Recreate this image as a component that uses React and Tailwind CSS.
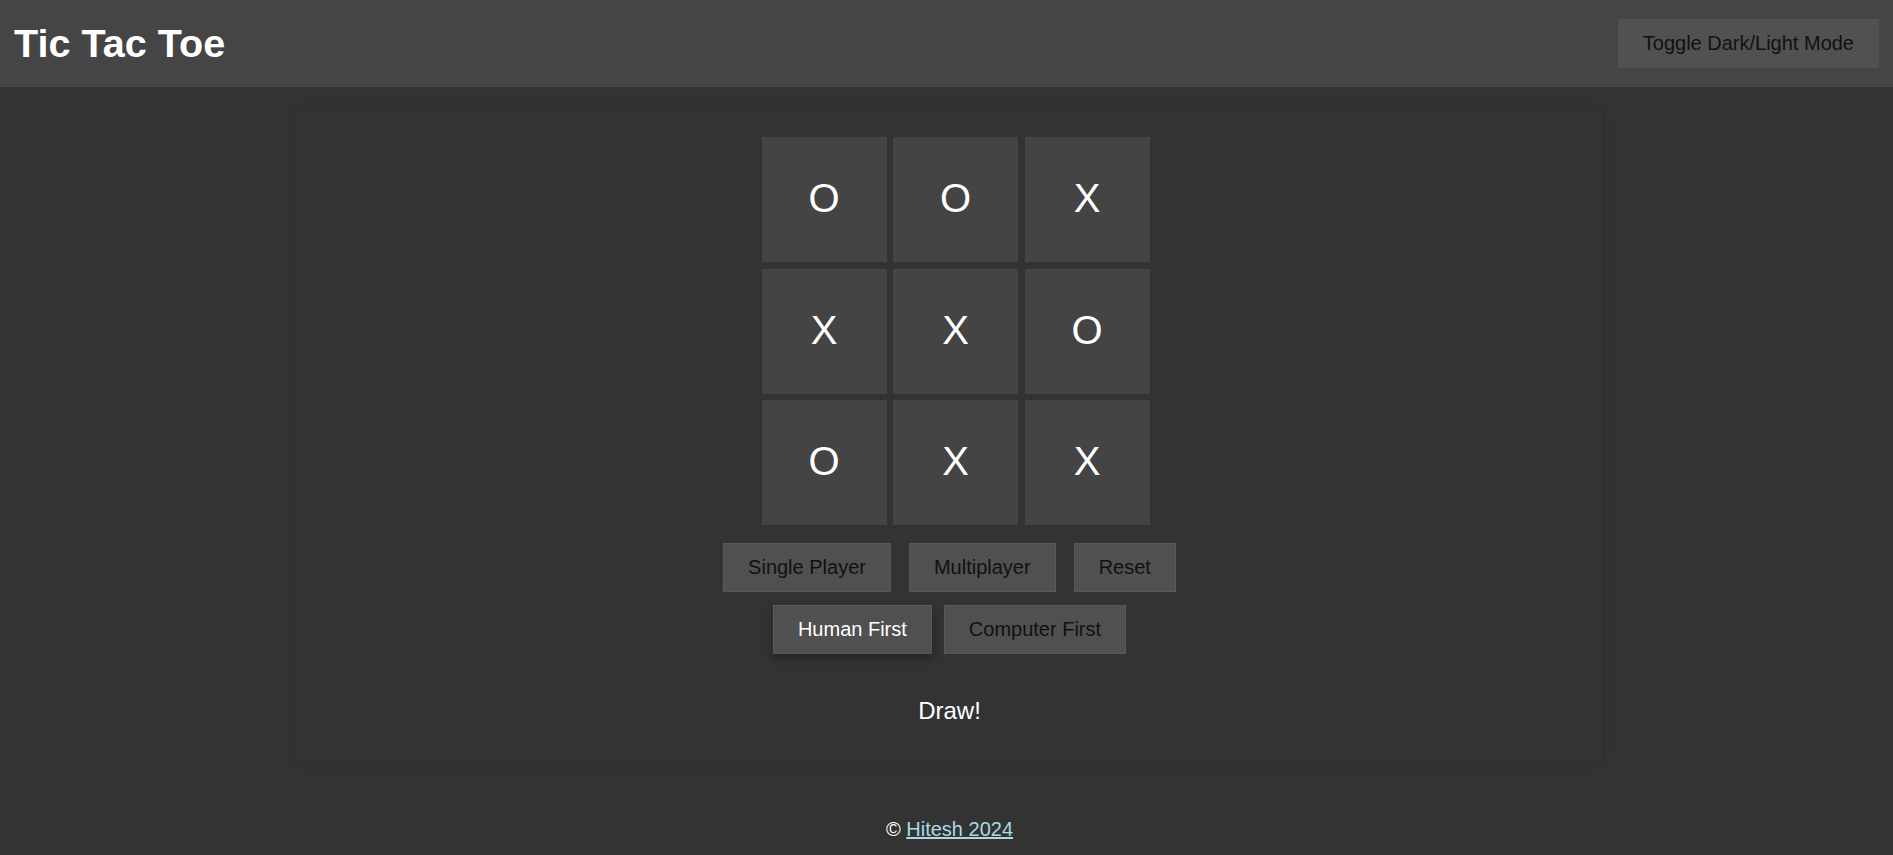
import React from "react";

const board = ["O", "O", "X", "X", "X", "O", "O", "X", "X"];

function Btn({ children, active }) {
  return (
    <button
      className={
        active
          ? "bg-[#505050] border border-[#595959] px-[24px] py-[12px] text-[20px] leading-[23px] text-white shadow-[0_4px_8px_rgba(0,0,0,0.35)]"
          : "bg-[#505050] border border-[#595959] px-[24px] py-[12px] text-[20px] leading-[23px] text-[#111]"
      }
    >
      {children}
    </button>
  );
}

export default function App() {
  return (
    <div
      className="min-h-[855px] bg-[#333333] text-white"
      style={{ fontFamily: '"Liberation Sans", Arial, sans-serif' }}
    >
      <header className="h-[87px] bg-[#454545] flex items-center justify-between px-[14px]">
        <h1 className="text-[39.6px] font-bold leading-none text-white">Tic Tac Toe</h1>
        <button className="bg-[#515151] border border-[#515151] px-[24px] py-[12px] text-[20px] leading-[23px] text-[#111]">
          Toggle Dark/Light Mode
        </button>
      </header>

      <div className="pt-[23px] pl-[6px] flex justify-center">
        <div className="w-[1305px] shadow-[0_0_10px_rgba(0,0,0,0.12)] pt-[27px] pb-[37px] flex flex-col items-center">
          <div className="w-[400px] flex justify-end">
            <div className="grid grid-cols-[125px_125px_125px] gap-[6.5px]">
              {board.map((v, i) => (
                <div
                  key={i}
                  className="w-[125px] h-[125px] bg-[#444444] flex items-center justify-center pb-[3px] text-[40px] text-white"
                >
                  {v}
                </div>
              ))}
            </div>
          </div>
          <div className="mt-[18px] flex gap-[18px]">
            <Btn>Single Player</Btn>
            <Btn>Multiplayer</Btn>
            <Btn>Reset</Btn>
          </div>
          <div className="mt-[13px] flex gap-[12px]">
            <Btn active>Human First</Btn>
            <Btn>Computer First</Btn>
          </div>
          <div className="mt-[43px] text-[24px] leading-[28px] text-white">Draw!</div>
        </div>
      </div>

      <footer className="pt-[56px] pl-[6px] text-center text-[20px] leading-[23px] text-white">
        © <a href="#" className="text-[#add8e6] underline">Hitesh 2024</a>
      </footer>
    </div>
  );
}
